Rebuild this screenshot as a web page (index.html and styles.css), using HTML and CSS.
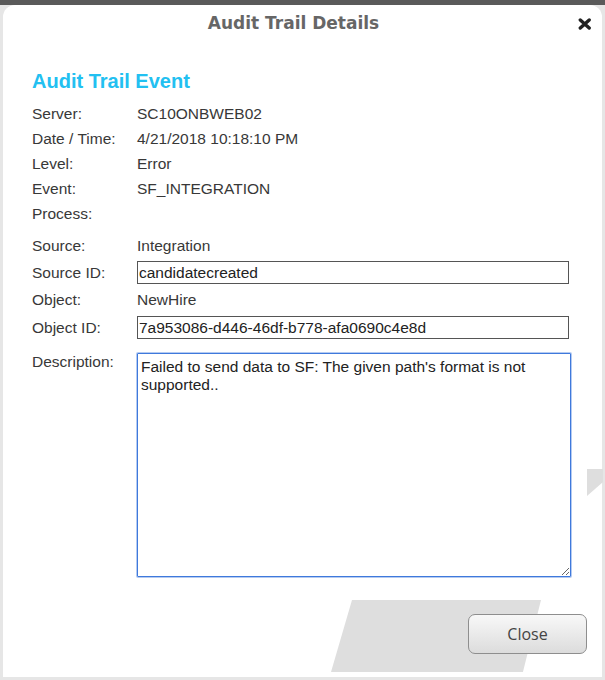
FILE: index.html
```html
<!DOCTYPE html>
<html>
<head>
<meta charset="utf-8">
<title>Audit Trail Details</title>
<link rel="stylesheet" href="styles.css">
</head>
<body>
<div class="topbar"></div>
<div class="dialog">
  <div class="deco deco-a"></div>
  <div class="deco deco-b"></div>
  <header class="titlebar">
    <h1 class="title">Audit Trail Details</h1>
    <span class="close-x" aria-label="Close">
      <svg width="14" height="12" viewBox="0 0 14 12"><path d="M2.3 2 L11.2 10 M11.2 2 L2.3 10" stroke="#222" stroke-width="3.4" stroke-linecap="round" fill="none"/></svg>
    </span>
  </header>
  <main class="content">
    <h2 class="heading">Audit Trail Event</h2>
    <div class="fields">
      <div class="row"><span class="label">Server:</span><span class="value">SC10ONBWEB02</span></div>
      <div class="row"><span class="label">Date / Time:</span><span class="value">4/21/2018 10:18:10 PM</span></div>
      <div class="row"><span class="label">Level:</span><span class="value">Error</span></div>
      <div class="row"><span class="label">Event:</span><span class="value">SF_INTEGRATION</span></div>
      <div class="row"><span class="label">Process:</span><span class="value"></span></div>
      <div class="row row-gap"><span class="label">Source:</span><span class="value">Integration</span></div>
      <div class="row row-input"><span class="label">Source ID:</span><input class="field" type="text" value="candidatecreated"></div>
      <div class="row"><span class="label">Object:</span><span class="value">NewHire</span></div>
      <div class="row row-input row-input2"><span class="label">Object ID:</span><input class="field" type="text" value="7a953086-d446-46df-b778-afa0690c4e8d"></div>
      <div class="row row-desc"><span class="label label-desc">Description:</span><textarea class="area">Failed to send data to SF: The given path's format is not supported..</textarea></div>
    </div>
  </main>
  <footer class="footer">
    <button class="btn" type="button">Close</button>
  </footer>
</div>
</body>
</html>
```
FILE: styles.css
```css
html, body {
  margin: 0;
  padding: 0;
}
body {
  background: #e6e6e6;
  width: 605px;
  height: 680px;
  overflow: hidden;
}
.topbar {
  height: 5px;
  background: #5a5a5a;
}
.dialog {
  position: relative;
  margin: 0 3px;
  height: 672px;
  background: #fff;
  border-radius: 12px 12px 0 0;
  display: flex;
  flex-direction: column;
}
.deco {
  position: absolute;
  background: #dedede;
}
.deco-a {
  left: 328px;
  top: 595px;
  width: 210px;
  height: 72px;
  clip-path: polygon(10% 0, 100% 0, 91.4% 100%, 0 100%);
}
.deco-b {
  right: -1px;
  top: 464px;
  width: 16px;
  height: 27px;
  clip-path: polygon(0 0, 100% 0, 100% 48%, 0 100%);
}
.titlebar {
  position: relative;
  display: grid;
  padding-top: 8px;
}
.title {
  grid-area: 1 / 1;
  margin: 0;
  padding-right: 18px;
  text-align: center;
  font-family: "DejaVu Sans", Verdana, sans-serif;
  font-weight: bold;
  font-size: 17px;
  line-height: 20px;
  color: #666;
}
.close-x {
  grid-area: 1 / 1;
  justify-self: end;
  align-self: center;
  margin-right: 10px;
  margin-top: 1px;
  display: flex;
}
.content {
  position: relative;
  flex: 1;
  padding: 36px 31px 0 29px;
  font-family: "Liberation Sans", Arial, sans-serif;
  font-size: 15.5px;
  color: #383838;
}
.heading {
  margin: 0 0 8px;
  font-family: "Liberation Sans", Arial, sans-serif;
  font-weight: bold;
  font-size: 20px;
  line-height: 24px;
  color: #22c0f1;
}
.fields {
  display: flex;
  flex-direction: column;
}
.row {
  display: grid;
  grid-template-columns: 105px 1fr;
  height: 25px;
  line-height: 25px;
  align-items: center;
}
.row-gap {
  margin-top: 7px;
}
.row-input {
  height: 29px;
}
.row-input2 {
  margin-top: 1px;
}
.field {
  box-sizing: border-box;
  width: 432px;
  height: 23px;
  margin: 0;
  padding: 0 1px;
  border: 1px solid #555;
  border-radius: 0;
  background: #fff;
  font-family: "Liberation Sans", Arial, sans-serif;
  font-size: 15.5px;
  color: #222;
  outline: none;
}
.row-desc {
  height: auto;
  margin-top: 11px;
  align-items: start;
}
.label-desc {
  line-height: 18px;
}
.area {
  box-sizing: border-box;
  display: block;
  width: 434px;
  height: 224px;
  margin: 0;
  padding: 4px 3px;
  border: 1px solid #3f79dc;
  box-shadow: 0 0 0 1px rgba(90, 140, 225, 0.45);
  border-radius: 1px;
  font-family: "Liberation Sans", Arial, sans-serif;
  font-size: 15.5px;
  line-height: 18px;
  color: #222;
  outline: none;
  resize: both;
}
.footer {
  position: relative;
  display: flex;
  justify-content: flex-end;
  padding: 0 15px 23px 0;
}
.btn {
  box-sizing: border-box;
  width: 119px;
  height: 40px;
  border: 1px solid #8e8e8e;
  border-radius: 7px;
  background: linear-gradient(#f8f8f8, #dcdcdc);
  font-family: "Open Sans", "Noto Sans", sans-serif;
  font-size: 16px;
  color: #444;
  padding: 0;
}
```
